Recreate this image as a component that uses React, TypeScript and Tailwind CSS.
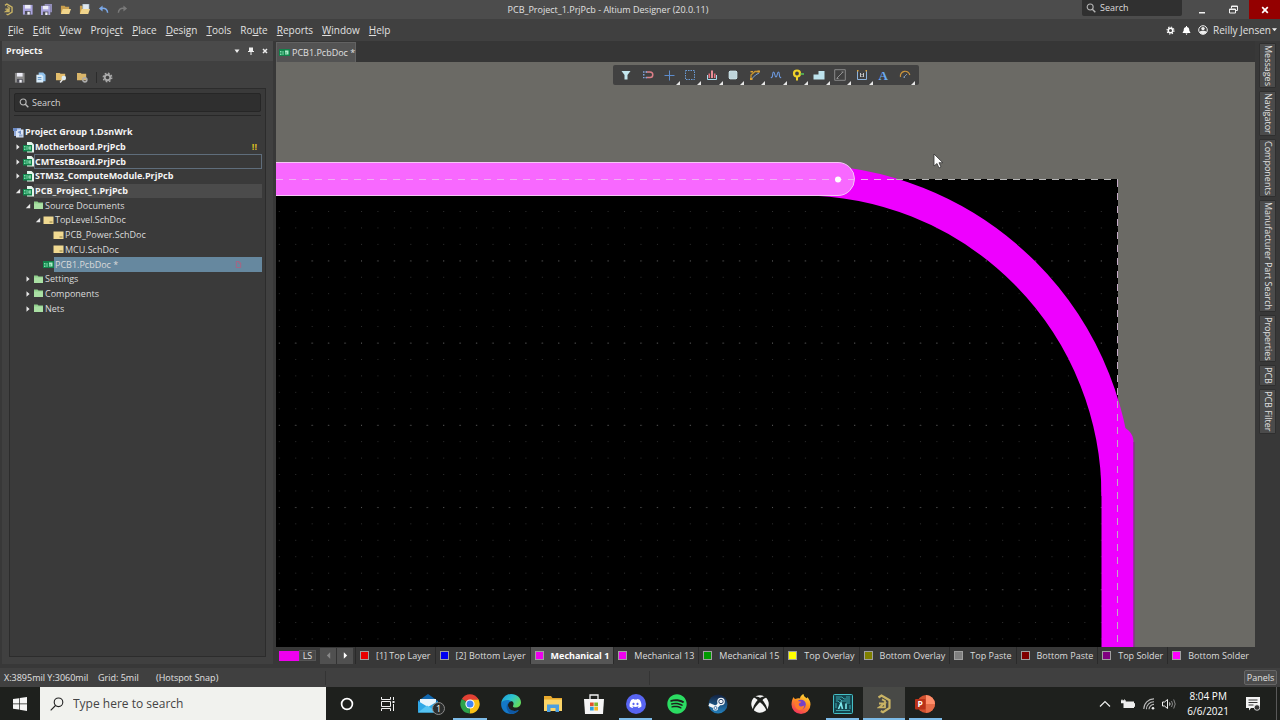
import type { ReactNode } from 'react';
import { FaDiscord, FaSpotify, FaXbox } from 'react-icons/fa';

const menus: [string, number][] = [
  ['File', 0], ['Edit', 0], ['View', 0], ['Project', 5], ['Place', 0], ['Design', 0],
  ['Tools', 0], ['Route', 2], ['Reports', 0], ['Window', 0], ['Help', 0],
];

const sideTabs = ['Messages', 'Navigator', 'Components', 'Manufacturer Part Search', 'Properties', 'PCB', 'PCB Filter'];

const layers = [
  { name: '[1] Top Layer', color: 'bg-[#e80000]' },
  { name: '[2] Bottom Layer', color: 'bg-[#0000f0]' },
  { name: 'Mechanical 1', color: 'bg-[#ee00ee]', active: true },
  { name: 'Mechanical 13', color: 'bg-[#ee00ee]' },
  { name: 'Mechanical 15', color: 'bg-[#009a00]' },
  { name: 'Top Overlay', color: 'bg-[#ffff00]' },
  { name: 'Bottom Overlay', color: 'bg-[#808000]' },
  { name: 'Top Paste', color: 'bg-[#808080]' },
  { name: 'Bottom Paste', color: 'bg-[#800000]' },
  { name: 'Top Solder', color: 'bg-[#800080]' },
  { name: 'Bottom Solder', color: 'bg-[#ff00ff]' },
];

type Kind = 'group' | 'project' | 'folder' | 'sch' | 'pcb';
type Node = { label: string; kind: Kind; level: number; open?: boolean; mark?: 'warn' | 'doc'; look?: 'outline' | 'current' | 'selected' };

const tree: Node[] = [
  { label: 'Project Group 1.DsnWrk', kind: 'group', level: 0 },
  { label: 'Motherboard.PrjPcb', kind: 'project', level: 1, open: false, mark: 'warn' },
  { label: 'CMTestBoard.PrjPcb', kind: 'project', level: 1, open: false, look: 'outline' },
  { label: 'STM32_ComputeModule.PrjPcb', kind: 'project', level: 1, open: false },
  { label: 'PCB_Project_1.PrjPcb', kind: 'project', level: 1, open: true, look: 'current' },
  { label: 'Source Documents', kind: 'folder', level: 2, open: true },
  { label: 'TopLevel.SchDoc', kind: 'sch', level: 3, open: true },
  { label: 'PCB_Power.SchDoc', kind: 'sch', level: 4 },
  { label: 'MCU.SchDoc', kind: 'sch', level: 4 },
  { label: 'PCB1.PcbDoc *', kind: 'pcb', level: 3, mark: 'doc', look: 'selected' },
  { label: 'Settings', kind: 'folder', level: 2, open: false },
  { label: 'Components', kind: 'folder', level: 2, open: false },
  { label: 'Nets', kind: 'folder', level: 2, open: false },
];

const indents = ['pl-0', 'pl-0', 'pl-[10px]', 'pl-[20px]', 'pl-[30px]'];

function AltiumMark({ className }: { className: string }) {
  return (
    <svg viewBox="0 0 14 20" className={className} fill="none" stroke="#c9b364" strokeWidth="2.2">
      <path d="M1.5 3.5 4.5 1.5 12.5 6.2V14L6 18.2 3.8 17" />
      <path d="M2 9.5h5.5L2 13.4h6V7L5 5.4" strokeWidth="1.8" />
    </svg>
  );
}

function FloppyIcon({ color = '#a9a3dd', double = false }: { color?: string; double?: boolean }) {
  return (
    <svg viewBox="0 0 12 12" className="size-[11px]">
      {double && <path d="M4 0h8v9h-2V2H4z" fill={color} opacity=".75" />}
      <g transform={double ? 'translate(0 2) scale(.84)' : 'translate(1 1) scale(.88)'}>
        <path d="M0 0h12v12H0z" fill={color} />
        <path d="M2.5 0h7v4.5h-7z" fill="#eeeef8" />
        <path d="M2.5 7.5h7V12h-7z" fill="#4d4d58" />
        <path d="M5.5 8.5h3V12h-3z" fill="#f0f0f5" />
      </g>
    </svg>
  );
}

function OpenFolderIcon({ page = false }: { page?: boolean }) {
  return (
    <svg viewBox="0 0 12 12" className="size-[11px]">
      <path d="M1 2h4l1 1h4v8H1z" fill="#c99f4e" />
      {page && <path d="M4 0h7v7H4z" fill="#dfe8ef" stroke="#7d96a8" strokeWidth=".6" />}
      <path d="M3 5.5h9L10 11H1z" fill="#f1d58c" />
    </svg>
  );
}

function ArrowBackIcon({ color }: { color: string }) {
  return (
    <svg viewBox="0 0 12 12" className="size-[11px]">
      <path d="M1 4.8 5 1.5v6.6z" fill={color} />
      <path d="M4 4.800c4-.6 6.300 1 6.500 4.700" fill="none" stroke={color} strokeWidth="1.6" />
    </svg>
  );
}

function SearchIcon({ className }: { className: string }) {
  return (
    <svg viewBox="0 0 12 12" className={className} fill="none" stroke="currentColor">
      <circle cx="5" cy="4.8" r="3.6" strokeWidth="1.3" />
      <path d="m7.6 7.6 3.6 3.6" strokeWidth="1.7" />
    </svg>
  );
}

function GearIcon({ className }: { className: string }) {
  return (
    <svg viewBox="0 0 12 12" className={className} fill="none" stroke="currentColor">
      <circle cx="6" cy="6" r="3" strokeWidth="2" />
      <circle cx="6" cy="6" r="4.7" strokeWidth="1.4" strokeDasharray="1.85 1.84" />
    </svg>
  );
}

function NodeIcon({ kind }: { kind: Kind }) {
  if (kind === 'folder')
    return <svg viewBox="0 0 11 11" className="size-[11px] shrink-0"><path d="M1 1.500h3.500l1 1H10V9H1z" fill="#8fd08b" /><path d="M1 3.500h9V9H1z" fill="#aae0a4" /></svg>;
  if (kind === 'sch')
    return <svg viewBox="0 0 11 11" className="size-[11px] shrink-0"><path d="M.5 1.500h10V9H.5z" fill="#f0d991" /><path d="M6.500 6.500h3v1h-3z" fill="#8d7b45" /></svg>;
  if (kind === 'group')
    return (
      <svg viewBox="0 0 11 11" className="size-[11px] shrink-0">
        <path d="M1 1h7v8H1z" fill="#8fa8d8" /><path d="M3 2.5h7.5V10.5H3z" fill="#dbe5f6" />
        <path d="M0 1h4v3H0zM4.5 5 8 3.5v4z" fill="#6d8cc6" /><path d="M6 7.5h3.5v2H6z" fill="#90a9d0" />
      </svg>
    );
  return (
    <svg viewBox="0 0 11 11" className="size-[11px] shrink-0">
      {kind === 'project' && <path d="M4 0h4.5L11 2.500v8H4z" fill="#e4f3ea" />}
      <path d={kind === 'project' ? 'M0 3h9v6.500H0z' : 'M0 2h11v7H0z'} fill="#12834b" />
      <path d="M1 4h1.500v1.500H1zM1 6.500h1.500V8H1zM3.500 4h1v4h-1z" fill="#7fe0ae" />
      <path d={kind === 'project' ? 'M5.500 4.500h2.500v3H5.500z' : 'M6 3.500h3.500v4H6z'} fill="#a9ecc8" /><path d="M6.500 5.500h1.200v1H6.500z" fill="#12834b" />
    </svg>
  );
}

function Arrow({ open }: { open: boolean }) {
  return (
    <svg viewBox="0 0 6 6" className="size-[6px]" fill="#e8e8e8">
      <path d={open ? 'M5.2 .8v4.4H.8z' : 'M1.5 .3 4.6 3 1.5 5.7z'} />
    </svg>
  );
}

function TreeRow({ node }: { node: Node }) {
  const bold = node.kind === 'group' || node.kind === 'project';
  const look =
    node.look === 'outline' ? 'border-[#5f6d7b] bg-[#393939]'
      : node.look === 'current' ? 'border-[#4b4b4b] bg-[#4b4b4b]'
        : node.look === 'selected' ? 'border-[#66889f] bg-[#66889f]'
          : 'border-transparent';
  return (
    <li className={`flex items-center ${indents[node.level]}`}>
      {node.level > 0 && <span className="flex w-[10px] shrink-0 items-center pl-[2px]">{node.open !== undefined && <Arrow open={node.open} />}</span>}
      <span className="flex w-[11px] shrink-0 items-center"><NodeIcon kind={node.kind} /></span>
      <span className={`flex h-full min-w-0 flex-1 items-center justify-between whitespace-nowrap border ${look} ${bold ? 'font-bold text-[#f4f4f4]' : 'text-[#dadada]'}`}>
        {node.label}
        {node.mark === 'warn' && <span className="pr-1 font-bold text-[#d8bb22]">!!</span>}
        {node.mark === 'doc' && (
          <svg viewBox="0 0 8 8" className="mr-[19px] size-[7px]" fill="none" stroke="#b06080"><path d="M1.5 .5h3l2 2v5h-5zM4.5 .5v2h2" /></svg>
        )}
      </span>
    </li>
  );
}

function ToolButton({ label, menu = true, children }: { label: string; menu?: boolean; children: ReactNode }) {
  return (
    <button type="button" aria-label={label} className="relative flex h-full flex-1 items-center justify-center">
      <svg viewBox="0 0 12 12" className="size-[12px]" fill="none">{children}</svg>
      {menu && <svg viewBox="0 0 4 4" className="absolute bottom-0 right-0 size-[4px]"><path d="M4 0v4H0z" fill="#e6e6e6" /></svg>}
    </button>
  );
}

function ActiveBar() {
  return (
    <div className="absolute left-1/2 top-[3px] flex h-[20px] w-[306px] -translate-x-1/2 rounded-[2px] bg-[#414141] px-[3px]">
      <ToolButton label="Filter" menu={false}><path d="M1.5 2h9L7.5 6v4.500h-3V6z" fill="#c3e6ee" /></ToolButton>
      <ToolButton label="Snapping" menu={false}>
        <path d="M4 3h4a2.700 2.700 0 0 1 0 5.600H4" stroke="#dd7f88" strokeWidth="1.500" /><path d="M1 3h1.500M1 5.800h1.500M1 8.600h1.500M3.500 3h1.500M3.500 8.600h1.500" stroke="#7fa3dd" strokeWidth="1.400" />
      </ToolButton>
      <ToolButton label="Move"><path d="M6.500 1.500v10M1.500 6.500h10" stroke="#5d8ccc" /></ToolButton>
      <ToolButton label="Select area"><path d="M1.500 1.500h9v9h-9z" stroke="#6a9bd4" strokeDasharray="1.500 1" /></ToolButton>
      <ToolButton label="Align"><path d="M2.500 4.500H4V9H2.500zM8 4.500h1.500V9H8z" fill="#e2707c" /><path d="M5 1.500h2V9H5z" fill="#e98d97" /><path d="M1.500 6v4.500h9V6" stroke="#a7d9ec" /></ToolButton>
      <ToolButton label="Component"><path d="M2 2h8v8H2z" fill="#cde4ea" /><path d="M4 1v10M6 1v10M8 1v10M1 4h10M1 6h10M1 8h10" stroke="#b7cdd3" strokeWidth=".8" /></ToolButton>
      <ToolButton label="Route track"><path d="M2 9.500V6L6 2.500h4" stroke="#c9952e" strokeWidth="1.300" /><path d="m2.500 10 4-4 3.500-2" stroke="#7ba4d8" /><path d="M1 9h2.500v2H1zM8.500 1.500H11v2H8.500zM1.500 2H4v1.500H1.500z" fill="#d9a137" /></ToolButton>
      <ToolButton label="Tune length"><path d="M.8 8.500C3.500 9.500 2 3 3.500 3S4.500 8 6 8s1-5 2.500-5S8.500 9.500 11.200 8.500" stroke="#6d9ae0" strokeWidth="1.100" /></ToolButton>
      <ToolButton label="Via"><circle cx="5" cy="4.500" r="3" stroke="#efd229" strokeWidth="2.200" /><path d="M5 7v4.500" stroke="#efd229" strokeWidth="2" /><path d="M8.500 5h3.500" stroke="#55b155" strokeWidth="1.800" /></ToolButton>
      <ToolButton label="Polygon"><path d="M.5 5.500h5V2h6v8.500H.5z" fill="#bde3ed" /></ToolButton>
      <ToolButton label="Keepout"><path d="M.7.7h10.600v10.600H.7z" stroke="#888" /><path d="m3 9 6-6M2.500 9.500h2M7.500 3h2" stroke="#909090" /></ToolButton>
      <ToolButton label="Dimension"><path d="M1.500 1.500v9h9v-9" stroke="#8db4dd" /><path d="M4.500 4v4M7.500 4v4M6 5v1M6 7v1" stroke="#c7c7c7" /><path d="M1 1h1.500v1.500H1zM9.500 1H11v1.500H9.500z" fill="#d9a137" /></ToolButton>
      <button type="button" className="flex flex-1 items-center justify-center font-['Liberation_Serif',serif] text-[13px] font-bold leading-none text-[#6aaaf0]">A</button>
      <ToolButton label="Arc"><path d="M1.500 8A4.700 4.700 0 0 1 10.800 6" stroke="#cf973d" strokeWidth="1.200" /><path d="m5 8 3-3" stroke="#7b91ab" /><path d="M4.500 7.500h1.500V9H4.500z" fill="#7b91ab" /></ToolButton>
    </div>
  );
}

function Board() {
  return (
    <svg className="block size-full" role="img" aria-label="Board outline">
      <defs>
        <pattern id="fine" x="2.8" y="149" width="16.44" height="16.44" patternUnits="userSpaceOnUse"><path d="M0 0h1v1H0z" fill="#303030" /></pattern>
        <pattern id="coarse" x="2.8" y="198.5" width="82.2" height="82.2" patternUnits="userSpaceOnUse"><path d="M0 0h1v1H0zM16.4 0h1v1h-1zM32.9 0h1v1h-1zM49.3 0h1v1h-1zM65.8 0h1v1h-1z" fill="#555" /></pattern>
      </defs>
      <path d="M0 117h842v600H0z" fill="#000" />
      <path d="M0 134h842v600H0z" fill="url(#fine)" />
      <path d="M0 134h842v600H0z" fill="url(#coarse)" />
      <path d="M525 118A316 316 0 0 1 841 434" fill="none" stroke="#ee00ff" strokeWidth="31" />
      <path d="M841.500 380V720" fill="none" stroke="#ee00ff" strokeWidth="32" strokeLinecap="round" />
      <path d="M858 380V720" stroke="#8b2291" />
      <path d="M-20 100.500H562a16.500 16.500 0 0 1 0 33H-20z" fill="#f868ff" stroke="#f5c6f6" />
      <path d="M0 117.500H620" stroke="#efb0f3" strokeDasharray="7 6" />
      <path d="M620 117.500H842" stroke="#b5b5b5" strokeDasharray="7 6" />
      <path d="M841.500 118V720" stroke="#c4aac6" strokeDasharray="7 6" />
      <circle cx="562" cy="117.5" r="3" fill="#fff" />
      <path d="M658 92v12l3-2.500 2 4.500 2-1-2-4.300h3.800z" fill="#fff" stroke="#333" strokeWidth=".8" />
    </svg>
  );
}

function ProjectsPanel() {
  return (
    <aside className="mx-[2px] mb-1 flex w-[271px] shrink-0 flex-col bg-[#404040]">
      <header className="flex h-[20px] shrink-0 items-center bg-[#4a4a4a] px-1 text-[#f4f4f4]">
        <h2 className="flex-1 text-[9px] font-bold">Projects</h2>
        <div className="flex items-center gap-[6px]">
          <button type="button" aria-label="Panel menu"><svg viewBox="0 0 8 8" className="size-[8px]" fill="#eee"><path d="M1.500 2.500h5L4 6z" /></svg></button>
          <button type="button" aria-label="Pin"><svg viewBox="0 0 8 8" className="size-[8px]" fill="#eee"><path d="M2 .5h4V4h1v1H4.500v3h-1V5H1V4h1z" /></svg></button>
          <button type="button" aria-label="Close panel"><svg viewBox="0 0 8 8" className="size-[8px]" stroke="#eee" strokeWidth="1.500"><path d="m2 2 4 4M6 2 2 6" /></svg></button>
        </div>
      </header>
      <div className="flex h-[27px] shrink-0 items-end gap-[10px] pb-[5px] pl-[12px] text-[#a9a9a9]">
        <button type="button" aria-label="Save"><FloppyIcon color="#8b8b8b" /></button>
        <button type="button" aria-label="Compile">
          <svg viewBox="0 0 12 12" className="size-[11px]"><path d="M4 .5h5l2.500 2.500v7H4z" fill="#8fc0ea" /><path d="M1.500 3h6L9 5v6.500H1.500z" fill="#d8ebf9" /><path d="M3 6h4M3 8h4" stroke="#5c93c6" /></svg>
        </button>
        <button type="button" aria-label="Find in project"><svg viewBox="0 0 12 12" className="size-[11px]"><path d="M0 1h4l1 1h5v7H0z" fill="#e3bd6c" /><circle cx="8.5" cy="6.5" r="2.5" fill="#dcebf3" /><path d="m7 8.500-2.500 3" stroke="#e8e8e8" strokeWidth="1.500" /></svg></button>
        <button type="button" aria-label="Project options"><svg viewBox="0 0 12 12" className="size-[11px]"><path d="M0 1h4l1 1h5v7H0z" fill="#d9b569" /><circle cx="8.5" cy="8.5" r="2.3" fill="none" stroke="#aaa" strokeWidth="1.700" /></svg></button>
        <span className="-mr-[8px] -ml-[2px] h-[11px] w-px bg-[#2c2c2c]" />
        <button type="button" aria-label="Panel settings" className="ml-[3px]"><GearIcon className="size-[11px]" /></button>
      </div>
      <div className="mx-[7px] mb-[7px] flex min-h-0 flex-1 flex-col border border-[#2c2c2c] bg-[#3a3a3a]">
        <label className="mx-[4px] mt-[4px] flex h-[19px] shrink-0 items-center gap-[3px] rounded-[2px] border border-[#262626] bg-[#2f2f2f] pl-[4px] text-[#b9b9b9]">
          <SearchIcon className="size-[10px]" />
          <input type="text" aria-label="Search projects" placeholder="Search" className="min-w-0 flex-1 bg-transparent text-[9px] outline-none placeholder:text-[#d4d4d4]" />
        </label>
        <div className="mx-[4px] mt-[3px] h-px shrink-0 bg-[#282828]" />
        <ul className="mx-[3px] mt-[9px] grid h-[191px] shrink-0 auto-rows-fr text-[9px] leading-[12px]">
          {tree.map((n) => <TreeRow key={n.label} node={n} />)}
        </ul>
      </div>
    </aside>
  );
}

function TaskItem({ label, open = false, active = false, children }: { label: string; open?: boolean; active?: boolean; children: ReactNode }) {
  return (
    <button type="button" aria-label={label} className={`relative flex h-full items-center justify-center ${active ? 'bg-[#484946]' : ''}`}>
      {children}
      {(open || active) && <span className={`absolute bottom-0 h-[2px] bg-[#7dbbe8] ${active ? 'inset-x-0' : 'inset-x-[4px]'}`} />}
    </button>
  );
}

function Taskbar() {
  return (
    <footer className="flex h-[33px] shrink-0 bg-[#1e201d] text-white">
      <button type="button" aria-label="Start" className="flex w-[40px] shrink-0 items-center justify-center">
        <svg viewBox="0 0 14 14" className="size-[14px]" fill="#f5f5f5"><path d="M0 2 6 1.200v5.300H0zM6.700 1.100 14 0v6.500H6.700zM0 7.200h6v5.300L0 11.700zM6.700 7.200H14V14l-7.300-1.200z" /></svg>
      </button>
      <label className="flex w-[286px] shrink-0 items-center gap-[9px] bg-[#f1f2ee] pl-[10px] text-[#333]">
        <svg viewBox="0 0 14 14" className="size-[14px]" fill="none" stroke="#222" strokeWidth="1.100"><circle cx="8.5" cy="5.3" r="4.3" /><path d="M5.500 8.500 .7 13.300" /></svg>
        <input type="text" aria-label="Windows search" placeholder="Type here to search" className="min-w-0 flex-1 bg-transparent text-[12px] outline-none placeholder:text-[#444]" />
      </label>
      <button type="button" aria-label="Cortana" className="flex w-[41px] shrink-0 items-center justify-center"><svg viewBox="0 0 14 14" className="size-[14px]" fill="none" stroke="#fff" strokeWidth="1.700"><circle cx="7" cy="7" r="5.4" /></svg></button>
      <button type="button" aria-label="Task view" className="flex w-[41px] shrink-0 items-center justify-center">
        <svg viewBox="0 0 14 14" className="size-[14px]" fill="none" stroke="#f0f0f0"><path d="M.5 0v2.500h9V0M.5 4.500h9v5h-9zM.5 14v-2.500h9V14M12.500 0v3M12.500 7v7" /><path d="M11.500 4h2v2h-2z" fill="#f0f0f0" stroke="none" /></svg>
      </button>
      <div className="grid w-[538px] shrink-0 grid-cols-13">
        <TaskItem label="Mail">
          <svg viewBox="0 0 28 22" className="ml-[4px] h-[22px] w-[28px]">
            <path d="M1 8 11 1l10 7v11H1z" fill="#1268b0" /><path d="M3 6h16v9H3z" fill="#e9f5fc" /><path d="m1 8 10 6 10-6v11.500H1z" fill="#30a8e6" /><path d="m1 19.500 9-7 11 7z" fill="#56c4f3" />
            <circle cx="21.5" cy="15.5" r="6" fill="#2b2d2c" stroke="#8a8a8a" /><text x="21.5" y="19" textAnchor="middle" fontSize="9" fill="#fff">1</text>
          </svg>
        </TaskItem>
        <TaskItem label="Chrome" open>
          <svg viewBox="0 0 20 20" className="size-[20px]">
            <path d="M10 10 1.800 5A9.500 9.500 0 0 1 18.200 5z" fill="#e34134" /><path d="M10 10 18.200 5A9.500 9.500 0 0 1 9.700 19.500z" fill="#fbc116" /><path d="M10 10 9.700 19.500A9.500 9.500 0 0 1 1.800 5z" fill="#2da24c" />
            <path d="M10 5.500h8.500L14 12z" fill="#fbc116" /><path d="M10 5.500H18.300L17.500 4H8z" fill="#e34134" /><circle cx="10" cy="10" r="4.600" fill="#fff" /><circle cx="10" cy="10" r="3.500" fill="#4285f4" />
          </svg>
        </TaskItem>
        <TaskItem label="Edge">
          <svg viewBox="0 0 20 20" className="size-[20px]">
            <defs><linearGradient id="edge" x1="0" y1="0" x2="1" y2=".6"><stop offset="0" stopColor="#1b93dc" /><stop offset=".5" stopColor="#2cc3d0" /><stop offset="1" stopColor="#62da5c" /></linearGradient></defs>
            <path d="M.2 9C1 4 5 0 10 0c6 0 10 4 10 8.500 0 3-2.500 5-5.200 5-2 0-3.300-.7-2.800-1.600 1.200-2 .6-4.900-2.500-4.900C5 7 2 7 .2 9z" fill="url(#edge)" />
            <path d="M.2 9C2 5.500 8 5 10.500 7.300 7 8 6 11.500 8 14.500c2 2.700 6 3.200 9.800 1.600C16 18.600 13.300 20 10 20 3.500 20-.5 14.500.2 9z" fill="#1478c8" /><path d="M10.500 7.300C6.500 8 6 12 8 14.500c2.300 2.800 6.300 3.100 9.800 1.600-1.700 2.300-4.300 3.800-7.500 3.900C4.500 18 3.500 8.500 10.500 7.300z" fill="#0f58a5" />
          </svg>
        </TaskItem>
        <TaskItem label="File Explorer">
          <svg viewBox="0 0 20 18" className="h-[18px] w-[20px]"><path d="M1 1h7l1.500 2H19v13H1z" fill="#e8a92d" /><path d="M1 4.500h18V16H1z" fill="#fbd568" /><path d="M4 17V9.500h12V17h-3.500v-4h-5v4z" fill="#4b9fe0" /></svg>
        </TaskItem>
        <TaskItem label="Store">
          <svg viewBox="0 0 20 20" className="size-[20px]"><path d="M6 6V1h8v5" fill="none" stroke="#f2f2f2" strokeWidth="1.300" /><path d="M0 5h20l-1 15H1z" fill="#f5f5f5" /><path d="M6 8.500h3.700v3.700H6z" fill="#e2512a" /><path d="M10.300 8.500H14v3.700h-3.700z" fill="#7eb82e" /><path d="M6 12.800h3.700v3.700H6z" fill="#2a9fdd" /><path d="M10.300 12.800H14v3.700h-3.700z" fill="#f4b51f" /></svg>
        </TaskItem>
        <TaskItem label="Discord" open><span className="flex size-[20px] items-center justify-center rounded-full bg-[#5865f2]"><FaDiscord className="size-[13px]" /></span></TaskItem>
        <TaskItem label="Spotify"><FaSpotify className="size-[20px] text-[#2bdc62]" /></TaskItem>
        <TaskItem label="Steam">
          <svg viewBox="0 0 20 20" className="size-[20px]">
            <defs><linearGradient id="steam" x1="0" y1="0" x2="0" y2="1"><stop offset="0" stopColor="#13213f" /><stop offset="1" stopColor="#2380bd" /></linearGradient></defs>
            <circle cx="10" cy="10" r="9.500" fill="url(#steam)" />
            <path d="m1 10.500 7 3 5.500-6" fill="none" stroke="#f3f6f8" strokeWidth="3.200" strokeLinejoin="round" />
            <circle cx="13" cy="7.500" r="3.800" fill="#f3f6f8" /><circle cx="13" cy="7.500" r="2.200" fill="none" stroke="#26436b" strokeWidth="1" />
            <circle cx="7.500" cy="14" r="2.600" fill="#f3f6f8" /><circle cx="7.500" cy="14" r="1.500" fill="none" stroke="#24609a" strokeWidth=".8" />
          </svg>
        </TaskItem>
        <TaskItem label="Xbox"><FaXbox className="size-[18px] text-[#f5f5f5]" /></TaskItem>
        <TaskItem label="Firefox">
          <svg viewBox="0 0 20 20" className="size-[20px]">
            <defs><linearGradient id="fox" x1=".8" y1="0" x2=".3" y2="1"><stop offset="0" stopColor="#ffe03a" /><stop offset=".45" stopColor="#ff9320" /><stop offset="1" stopColor="#f2305f" /></linearGradient></defs>
            <path d="M2.500 3c.4 1 1 1.600 2 2C6 4 8 4 9 4.500 9 2.500 10.500 1 12.500 0c0 2 1.500 3 3 4.200.4.300.6-.7.500-1.200 2.200 2 3.500 4.500 3.500 7.500A9.500 9.500 0 0 1 .5 10.500C.5 7 1.500 5 2.500 3z" fill="url(#fox)" />
            <circle cx="10" cy="10.500" r="4.800" fill="#7542c8" /><path d="M4 7c3-1 4 .5 6.500.7-1 1.300-3 1.300-2.700 3 .5 2.300 4 2.300 5.700.3-.3 4-3 5.500-5.500 5C4.500 15 3 11 4 7z" fill="#ff7b2c" />
          </svg>
        </TaskItem>
        <TaskItem label="Circuit editor" open>
          <svg viewBox="0 0 20 20" className="size-[20px]" fill="none" stroke="#45bfc6"><rect x=".5" y=".5" width="19" height="19" rx="1" fill="#14454e" /><path d="M3 3h6l2 2h6M3 5h4l2 2h8M3 7h2l2 2M17 9h-4M3 16.500h14M17 3h-4M3 9v5M17 11v4" strokeWidth=".8" /><path d="m5.500 15 2.500-6 1.500 6M13 9.500V15" stroke="#7be7eb" strokeWidth="1.600" /></svg>
        </TaskItem>
        <TaskItem label="Altium Designer" active><AltiumMark className="h-[20px] w-[14px]" /></TaskItem>
        <TaskItem label="PowerPoint" open>
          <svg viewBox="0 0 20 20" className="size-[20px]"><circle cx="11" cy="10" r="9" fill="#d35230" /><path d="M11 1a9 9 0 0 1 9 9h-9z" fill="#ff8f6b" /><path d="M11 10h9a9 9 0 0 1-9 9z" fill="#e66c48" /><rect y="5" width="10.500" height="10.500" rx="1" fill="#b93118" /><text x="5.200" y="13.200" textAnchor="middle" fontSize="8.500" fontWeight="700" fill="#fff">P</text></svg>
        </TaskItem>
      </div>
      <div className="flex flex-1 items-center justify-end">
        <svg viewBox="0 0 12 8" className="mr-[10px] h-[8px] w-[12px]" fill="none" stroke="#eee" strokeWidth="1.200"><path d="m1 6.500 5-5 5 5" /></svg>
        <svg viewBox="0 0 14 10" className="mr-[8px] h-[10px] w-[14px]"><path d="M2.500 2.500H13v6.500H2.500z" fill="#eee" /><path d="M13 4.500h1v3h-1zM1 0v2M3.500 0v2M0 1.500h4.500V4H0z" fill="#eee" stroke="#eee" strokeWidth=".5" /></svg>
        <svg viewBox="0 0 12 12" className="mr-[7px] size-[12px]" fill="none" stroke="#bbb" strokeWidth="1.100"><path d="M.8 11A10 10 0 0 1 11 .9M3.400 11.200A7.500 7.500 0 0 1 11 3.700M6 11.300a5 5 0 0 1 5-4.900" /><circle cx="10" cy="10.300" r="1.300" fill="#eee" stroke="none" /></svg>
        <svg viewBox="0 0 14 12" className="mr-[11px] h-[12px] w-[14px]" fill="none" stroke="#eee"><path d="M.5 4h2L5.500 1.500v9L2.500 8h-2zM7.500 4.500q1 1.500 0 3" /><path d="M9.500 3q2 3 0 6M11.700 1.500q3 4.500 0 9" stroke="#888" /></svg>
        <div className="mr-[17px] text-center text-[10px] leading-[15px]"><div>8:04 PM</div><div>6/6/2021</div></div>
        <svg viewBox="0 0 14 14" className="mr-[16px] size-[14px]"><path d="M0 0h14v11H5l-2 2.500V11H0z" fill="#f4f4f4" /><path d="M2.500 3h9M2.500 5.500h9M2.500 8h5" stroke="#333" /><circle cx="11" cy="10.500" r="2.800" fill="#333" stroke="#eee" strokeWidth=".8" /></svg>
        <span className="mr-[3px] h-full w-px bg-[#595959]" />
      </div>
    </footer>
  );
}

export default function App() {
  return (
    <div className="flex h-screen flex-col overflow-hidden bg-[#383838] font-['Open_Sans','Noto_Sans',sans-serif] text-[9px] text-[#e0e0e0]">
      <header className="grid h-[19px] shrink-0 grid-cols-[1fr_auto_1fr] bg-[#4c4c4c]">
        <div className="flex items-center gap-[8px] pl-[4px]">
          <AltiumMark className="mr-[1px] h-[13px] w-[9px]" />
          <button type="button" aria-label="Save"><FloppyIcon /></button>
          <button type="button" aria-label="Save all"><FloppyIcon double /></button>
          <button type="button" aria-label="Open"><OpenFolderIcon /></button>
          <button type="button" aria-label="Open project"><OpenFolderIcon page /></button>
          <button type="button" aria-label="Undo"><ArrowBackIcon color="#7ba9ea" /></button>
          <button type="button" aria-label="Redo" className="-scale-x-100"><ArrowBackIcon color="#7a7a7a" /></button>
        </div>
        <h1 className="self-center whitespace-nowrap pr-[64px]">PCB_Project_1.PrjPcb - Altium Designer (20.0.11)</h1>
        <div className="flex justify-end">
          <label className="mr-[4px] flex h-[16px] w-[100px] items-center gap-[4px] rounded-b-[2px] bg-[#303030] pl-[4px] text-[#b5b5b5]">
            <SearchIcon className="size-[10px]" />
            <input type="text" aria-label="Search commands" placeholder="Search" className="min-w-0 flex-1 bg-transparent outline-none placeholder:text-[#dcdcdc]" />
          </label>
          <button type="button" aria-label="Minimize" className="flex w-[32px] items-center justify-center"><svg viewBox="0 0 8 8" className="size-[8px]"><path d="M1 6h6v1.500H1z" fill="#f0f0f0" /></svg></button>
          <button type="button" aria-label="Restore" className="flex w-[31px] items-center justify-center"><svg viewBox="0 0 9 9" className="size-[9px]" fill="none" stroke="#f0f0f0"><path d="M.5 4h6v4h-6zM.5 4.500h6M2.500 3.500V1h6v4.500H7M2.500 1.500h6" /></svg></button>
          <button type="button" aria-label="Close" className="flex w-[31px] items-center justify-center bg-[#940000]"><svg viewBox="0 0 8 8" className="size-[8px]" stroke="#fff" strokeWidth="1.700"><path d="m1.200 1.200 5.600 5.600M6.800 1.200 1.200 6.800" /></svg></button>
        </div>
      </header>

      <div className="flex h-[22px] shrink-0 items-center justify-between bg-[#404040] text-[10px]">
        <nav className="flex gap-[9px] pl-[8px]">
          {menus.map(([m, k]) => (
            <button type="button" key={m}>{m.slice(0, k)}<span className="underline">{m[k]}</span>{m.slice(k + 1)}</button>
          ))}
        </nav>
        <div className="flex items-center pr-[3px]">
          <GearIcon className="mr-[7px] size-[9px] text-white" />
          <svg viewBox="0 0 9 9" className="mr-[7px] size-[9px]" fill="#fff"><path d="M4 0h1v1c2 .3 2.300 2 2.300 3.500L8.500 7h-8l1.200-2.500C1.700 3 2 1.300 4 1zM3.500 7.500h2L4.500 9z" /></svg>
          <svg viewBox="0 0 10 10" className="mr-[5px] size-[10px]"><circle cx="5" cy="5" r="4.300" fill="none" stroke="#eee" /><circle cx="5" cy="3.600" r="1.700" fill="#eee" /><path d="M1.500 6.500c1.500-1 5.500-1 7 0C7.500 10 2.500 10 1.500 6.500z" fill="#eee" /></svg>
          <button type="button" className="flex items-center gap-[1px]">Reilly Jensen<svg viewBox="0 0 6 4" className="h-[4px] w-[5px]"><path d="M0 0h6L3 3.500z" fill="#eee" /></svg></button>
        </div>
      </div>

      <main className="flex min-h-0 flex-1">
        <ProjectsPanel />
        <section className="ml-px flex min-w-0 flex-1 flex-col">
          <div className="flex h-[21px] shrink-0 items-end bg-[#363636]">
            <button type="button" className="flex h-[20px] w-[80px] items-center gap-[2px] whitespace-nowrap border border-b-0 border-[#626262] bg-[#535353] pl-[2px]"><NodeIcon kind="pcb" />PCB1.PcbDoc *</button>
          </div>
          <div className="relative min-h-0 flex-1 overflow-hidden bg-[#6b6a65]">
            <Board />
            <ActiveBar />
          </div>
          <div className="mb-1 flex h-[17px] shrink-0 items-center overflow-hidden whitespace-nowrap">
            <span className="ml-[3px] h-[10px] w-[20px] shrink-0 bg-[#ee00ee]" />
            <button type="button" className="h-[11px] w-[17px] shrink-0 border border-[#555] bg-[#484848] leading-[9px]">LS</button>
            <div className="ml-[4px] mr-[2px] flex h-[16px] w-[33px] shrink-0 divide-x divide-[#333] bg-[#505050]">
              <button type="button" aria-label="Previous layers" className="flex flex-1 items-center justify-center"><svg viewBox="0 0 6 8" className="h-[7px] w-[5px]"><path d="M5 0v8L1 4z" fill="#888" /></svg></button>
              <button type="button" aria-label="Next layers" className="flex flex-1 items-center justify-center"><svg viewBox="0 0 6 8" className="h-[7px] w-[5px]"><path d="M1 0v8l4-4z" fill="#fff" /></svg></button>
            </div>
            {layers.map((l) => (
              <button type="button" key={l.name} className={`flex h-full shrink-0 items-center gap-[7px] border-l border-[#2a2a2a] px-[4px] ${l.active ? 'bg-[#555555] font-bold text-white' : 'text-[#dcdcdc]'}`}>
                <span className={`size-[9px] border border-[#a0a0a0] ${l.color}`} />{l.name}
              </button>
            ))}
          </div>
        </section>
        <aside className="mt-[2px] flex w-[25px] shrink-0 flex-col items-start gap-[3px] pl-[4px]">
          {sideTabs.map((t) => (
            <button type="button" key={t} className="w-[17px] whitespace-nowrap rounded-[1px] border border-[#2f2f2f] bg-[#4b4b4b] pb-[1px] pl-[1px] pt-[1px] leading-[13px] [writing-mode:vertical-rl]">{t}</button>
          ))}
        </aside>
      </main>

      <div className="flex h-[19px] shrink-0 items-center bg-[#404040] pl-[4px] pr-[3px]">
        <span className="w-[94px]">X:3895mil Y:3060mil</span>
        <span className="w-[58px]">Grid: 5mil</span>
        <span className="w-[169px]">(Hotspot Snap)</span>
        <span className="h-[14px] w-[325px] border-l border-r border-[#343434]" />
        <span className="flex-1" />
        <button type="button" className="h-[15px] w-[33px] rounded-[2px] border border-[#666] bg-[#4c4c4c] leading-[13px]">Panels</button>
      </div>
      <Taskbar />
    </div>
  );
}
